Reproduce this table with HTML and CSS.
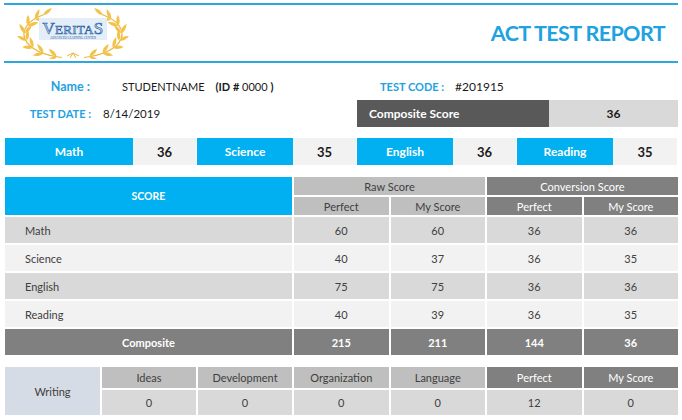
FILE: index.html
```html
<!DOCTYPE html>
<html lang="en">
<head>
<meta charset="utf-8">
<title>ACT Test Report</title>
<link rel="stylesheet" href="styles.css">
</head>
<body>
<div class="page">
  <header class="header">
    <div class="logo">
      <svg width="112" height="51" viewBox="0 0 112 51" aria-label="Veritas Advanced Learning Center">
        <defs>
          <path id="leaf" d="M0,0 Q4.5,-3.4 11,0 Q4.5,3.4 0,0Z"/>
          <g id="branch">
            <path d="M45,49.5 A48,24 0 0,1 27,6.5" fill="none" stroke="#e9b73a" stroke-width="1.2"/>
            <use href="#leaf" transform="translate(39.6,48.6) rotate(155)"/>
            <use href="#leaf" transform="translate(39.6,48.6) rotate(225)"/>
            <use href="#leaf" transform="translate(26.4,44.9) rotate(166)"/>
            <use href="#leaf" transform="translate(26.4,44.9) rotate(236)"/>
            <use href="#leaf" transform="translate(16.2,39.4) rotate(182)"/>
            <use href="#leaf" transform="translate(16.2,39.4) rotate(252)"/>
            <use href="#leaf" transform="translate(9.9,32.6) rotate(205)"/>
            <use href="#leaf" transform="translate(9.9,32.6) rotate(275)"/>
            <use href="#leaf" transform="translate(8,25.2) rotate(239)"/>
            <use href="#leaf" transform="translate(8,25.2) rotate(309)"/>
            <use href="#leaf" transform="translate(10.9,17.8) rotate(271)"/>
            <use href="#leaf" transform="translate(10.9,17.8) rotate(341)"/>
            <use href="#leaf" transform="translate(18.2,11.2) rotate(292)"/>
            <use href="#leaf" transform="translate(18.2,11.2) rotate(362)"/>
            <use href="#leaf" transform="translate(26.4,7.1) rotate(320)"/>
          </g>
        </defs>
        <g fill="#f3c24a">
          <use href="#branch"/>
          <use href="#branch" transform="translate(112,0) scale(-1,1)"/>
        </g>
        <path d="M50,48 L56,45 L62,48 M56,45 L53,50 M56,45 L59,50" fill="none" stroke="#e9b73a" stroke-width="1"/>
        <rect x="22" y="10" width="68" height="22" fill="#e3eef9"/>
        <text x="56" y="25.5" text-anchor="middle" font-family="Liberation Serif, serif" fill="#b7d6f2" stroke="#2b5c9c" stroke-width="0.6" letter-spacing="0.3"><tspan font-size="17">V</tspan><tspan font-size="13">ERITA</tspan><tspan font-size="17">S</tspan></text>
        <text x="56" y="30.6" text-anchor="middle" font-family="Liberation Serif, serif" font-size="3.2" fill="#2b5c9c" textLength="46" lengthAdjust="spacingAndGlyphs">ADVANCED LEARNING CENTER</text>
      </svg>
    </div>
    <h1 class="title">ACT TEST REPORT</h1>
  </header>

  <section class="info">
    <div class="info-row">
      <div class="info-left">
        <span class="label label-name">Name :</span>
        <span class="value value-name">STUDENTNAME</span>
        <span class="value value-id"><b>(ID #</b> 0000 <b>)</b></span>
      </div>
      <div class="info-right">
        <span class="label label-code">TEST CODE :</span>
        <span class="value value-code">#201915</span>
      </div>
    </div>
    <div class="info-row info-row2">
      <div class="info-left">
        <span class="label label-date">TEST DATE :</span>
        <span class="value value-date">8/14/2019</span>
      </div>
      <div class="composite-box">
        <span class="cb-label">Composite Score</span>
        <span class="cb-value">36</span>
      </div>
    </div>
  </section>

  <section class="subjects">
    <div class="subj">Math</div><div class="subj-val">36</div>
    <div class="subj">Science</div><div class="subj-val">35</div>
    <div class="subj">English</div><div class="subj-val">36</div>
    <div class="subj">Reading</div><div class="subj-val">35</div>
  </section>

  <section class="score-table">
    <div class="c-score">SCORE</div>
    <div class="c-raw">Raw Score</div>
    <div class="c-conv">Conversion Score</div>
    <div class="h-light">Perfect</div>
    <div class="h-light">My Score</div>
    <div class="h-dark">Perfect</div>
    <div class="h-dark">My Score</div>

    <div class="r1 name">Math</div><div class="r1">60</div><div class="r1">60</div><div class="r1">36</div><div class="r1">36</div>
    <div class="r2 name">Science</div><div class="r2">40</div><div class="r2">37</div><div class="r2">36</div><div class="r2">35</div>
    <div class="r1 name">English</div><div class="r1">75</div><div class="r1">75</div><div class="r1">36</div><div class="r1">36</div>
    <div class="r2 name">Reading</div><div class="r2">40</div><div class="r2">39</div><div class="r2">36</div><div class="r2">35</div>

    <div class="tot">Composite</div><div class="tot">215</div><div class="tot">211</div><div class="tot">144</div><div class="tot">36</div>
  </section>

  <section class="writing">
    <div class="w-label">Writing</div>
    <div class="h-light">Ideas</div>
    <div class="h-light">Development</div>
    <div class="h-light">Organization</div>
    <div class="h-light">Language</div>
    <div class="h-dark">Perfect</div>
    <div class="h-dark">My Score</div>
    <div class="r1">0</div>
    <div class="r1">0</div>
    <div class="r1">0</div>
    <div class="r1">0</div>
    <div class="r1">12</div>
    <div class="r1">0</div>
  </section>
</div>
</body>
</html>
```

FILE: styles.css
```css
* { box-sizing: border-box; }

html, body {
  margin: 0;
  padding: 0;
  background: #ffffff;
}

body {
  font-family: Lato, "Open Sans", Arial, sans-serif;
  color: #404040;
  font-size: 11px;
  width: 682px;
  height: 420px;
  overflow: hidden;
}

.page {
  padding: 0 4px 0 5px;
}

/* header */
.header {
  margin: 3px 0 0 -1px;
  height: 60px;
  border-top: 2px solid #2ea6de;
  border-bottom: 2px solid #2ea6de;
  display: flex;
  align-items: center;
  justify-content: space-between;
  padding: 0 13px 0 13px;
}

.logo {
  display: flex;
  align-items: center;
  height: 52px;
}

.logo svg { display: block; }

.title {
  margin: 0;
  font-size: 21.5px;
  font-weight: 700;
  color: #1ea2e0;
  letter-spacing: -0.6px;
}

/* info */
.info {
  margin-top: 11px;
}

.info-row {
  display: grid;
  grid-template-columns: 352px 1fr;
  height: 24px;
  align-items: center;
}

.info-row2 {
  margin-top: 2px;
  height: 27px;
}

.info-left, .info-right {
  display: flex;
  align-items: center;
}

.label {
  color: #1ea2e0;
  font-weight: 700;
  white-space: nowrap;
}

.label-name {
  width: 85px;
  text-align: right;
  font-size: 12.5px;
}

.label-date {
  width: 86px;
  text-align: right;
  font-size: 11px;
}

.label-code {
  margin-left: 23px;
  font-size: 11px;
}

.value {
  color: #1a1a1a;
  font-size: 12px;
  white-space: nowrap;
}

.value-name { margin-left: 32px; font-size: 11px; }
.value-id { margin-left: 11px; font-size: 11px; }
.value-id b { font-weight: 700; }
.value-date { margin-left: 12px; font-size: 11.5px; }
.value-code { margin-left: 11px; font-size: 12px; }

.composite-box {
  display: grid;
  grid-template-columns: 192px 1fr;
  height: 27px;
}

.cb-label {
  background: #595959;
  color: #ffffff;
  font-weight: 700;
  font-size: 12px;
  display: flex;
  align-items: center;
  padding-left: 12px;
}

.cb-value {
  background: #d9d9d9;
  color: #1a1a1a;
  font-weight: 700;
  font-size: 12px;
  display: flex;
  align-items: center;
  justify-content: center;
}

/* subject boxes */
.subjects {
  margin-top: 11px;
  display: grid;
  grid-template-columns: 128px 64px 96px 64px 96px 64px 96px 1fr;
  height: 27px;
}

.subj {
  background: #00b0f0;
  color: #ffffff;
  font-weight: 700;
  font-size: 12px;
  display: flex;
  align-items: center;
  justify-content: center;
}

.subj-val {
  background: #f2f2f2;
  color: #1a1a1a;
  font-weight: 700;
  font-size: 13px;
  display: flex;
  align-items: center;
  justify-content: center;
  margin-right: 1px;
}

/* score table */
.score-table {
  margin-top: 12px;
  display: grid;
  grid-template-columns: 287px repeat(4, 1fr);
  grid-template-rows: 18px 18px repeat(5, 26px);
  gap: 2px;
}

.score-table > div,
.writing > div {
  display: flex;
  align-items: center;
  justify-content: center;
}

.c-score {
  grid-row: 1 / span 2;
  background: #00b0f0;
  color: #ffffff;
  font-weight: 700;
  font-size: 10.5px;
}

.c-raw {
  grid-column: 2 / span 2;
  background: #bfbfbf;
}

.c-conv {
  grid-column: 4 / span 2;
  background: #808080;
  color: #ffffff;
}

.h-light { background: #bfbfbf; }
.h-dark { background: #808080; color: #ffffff; }

.r1 { background: #d9d9d9; }
.r2 { background: #f2f2f2; }

.score-table > .name {
  justify-content: flex-start;
  padding-left: 20px;
}

.tot {
  background: #808080;
  color: #ffffff;
  font-weight: 700;
}

/* writing */
.writing {
  margin-top: 12px;
  display: grid;
  grid-template-columns: 95px 94px 94px repeat(4, 1fr);
  grid-template-rows: 21px 25px;
  gap: 2px;
}

.w-label {
  grid-row: 1 / span 2;
  background: #d6dce5;
}
```
